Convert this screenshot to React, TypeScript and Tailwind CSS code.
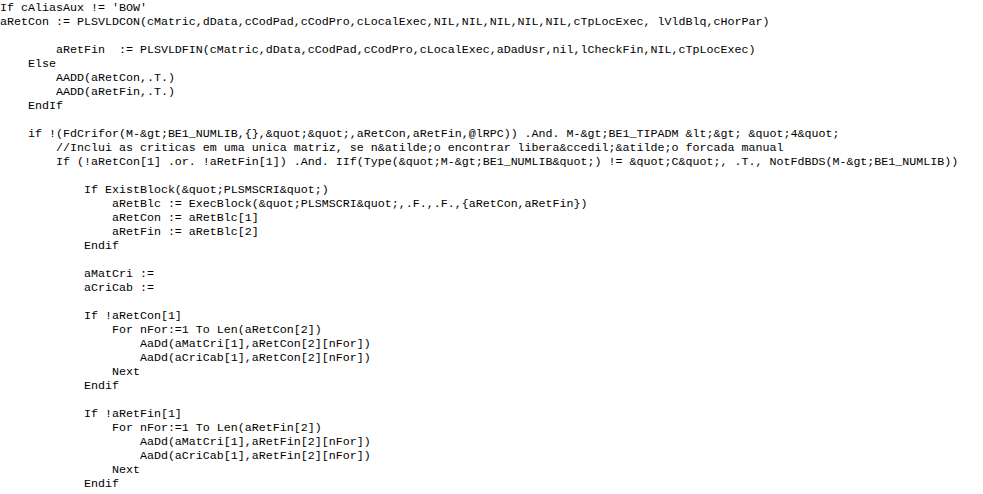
import React from "react";

const lines: string[] = [
  "If cAliasAux != 'BOW'",
  "aRetCon := PLSVLDCON(cMatric,dData,cCodPad,cCodPro,cLocalExec,NIL,NIL,NIL,NIL,NIL,cTpLocExec, lVldBlq,cHorPar)",
  "",
  "        aRetFin  := PLSVLDFIN(cMatric,dData,cCodPad,cCodPro,cLocalExec,aDadUsr,nil,lCheckFin,NIL,cTpLocExec)",
  "    Else",
  "        AADD(aRetCon,.T.)",
  "        AADD(aRetFin,.T.)",
  "    EndIf",
  "",
  "    if !(FdCrifor(M-&gt;BE1_NUMLIB,{},&quot;&quot;,aRetCon,aRetFin,@lRPC)) .And. M-&gt;BE1_TIPADM &lt;&gt; &quot;4&quot;",
  "        //Inclui as criticas em uma unica matriz, se n&atilde;o encontrar libera&ccedil;&atilde;o forcada manual",
  "        If (!aRetCon[1] .or. !aRetFin[1]) .And. IIf(Type(&quot;M-&gt;BE1_NUMLIB&quot;) != &quot;C&quot;, .T., NotFdBDS(M-&gt;BE1_NUMLIB))",
  "",
  "            If ExistBlock(&quot;PLSMSCRI&quot;)",
  "                aRetBlc := ExecBlock(&quot;PLSMSCRI&quot;,.F.,.F.,{aRetCon,aRetFin})",
  "                aRetCon := aRetBlc[1]",
  "                aRetFin := aRetBlc[2]",
  "            Endif",
  "",
  "            aMatCri :=",
  "            aCriCab :=",
  "",
  "            If !aRetCon[1]",
  "                For nFor:=1 To Len(aRetCon[2])",
  "                    AaDd(aMatCri[1],aRetCon[2][nFor])",
  "                    AaDd(aCriCab[1],aRetCon[2][nFor])",
  "                Next",
  "            Endif",
  "",
  "            If !aRetFin[1]",
  "                For nFor:=1 To Len(aRetFin[2])",
  "                    AaDd(aMatCri[1],aRetFin[2][nFor])",
  "                    AaDd(aCriCab[1],aRetFin[2][nFor])",
  "                Next",
  "            Endif",
];

export default function App() {
  return (
    <div className="w-[983px] h-[494px] overflow-hidden bg-white pt-[1px]">
      <pre
        className="m-0 whitespace-pre text-[11.67px] leading-[14px] text-black"
        style={{ fontFamily: '"Liberation Mono", "Courier New", monospace' }}
      >
        {lines.map((l, i) => (
          <div key={i} className="h-[14px]">
            {l}
          </div>
        ))}
      </pre>
    </div>
  );
}
